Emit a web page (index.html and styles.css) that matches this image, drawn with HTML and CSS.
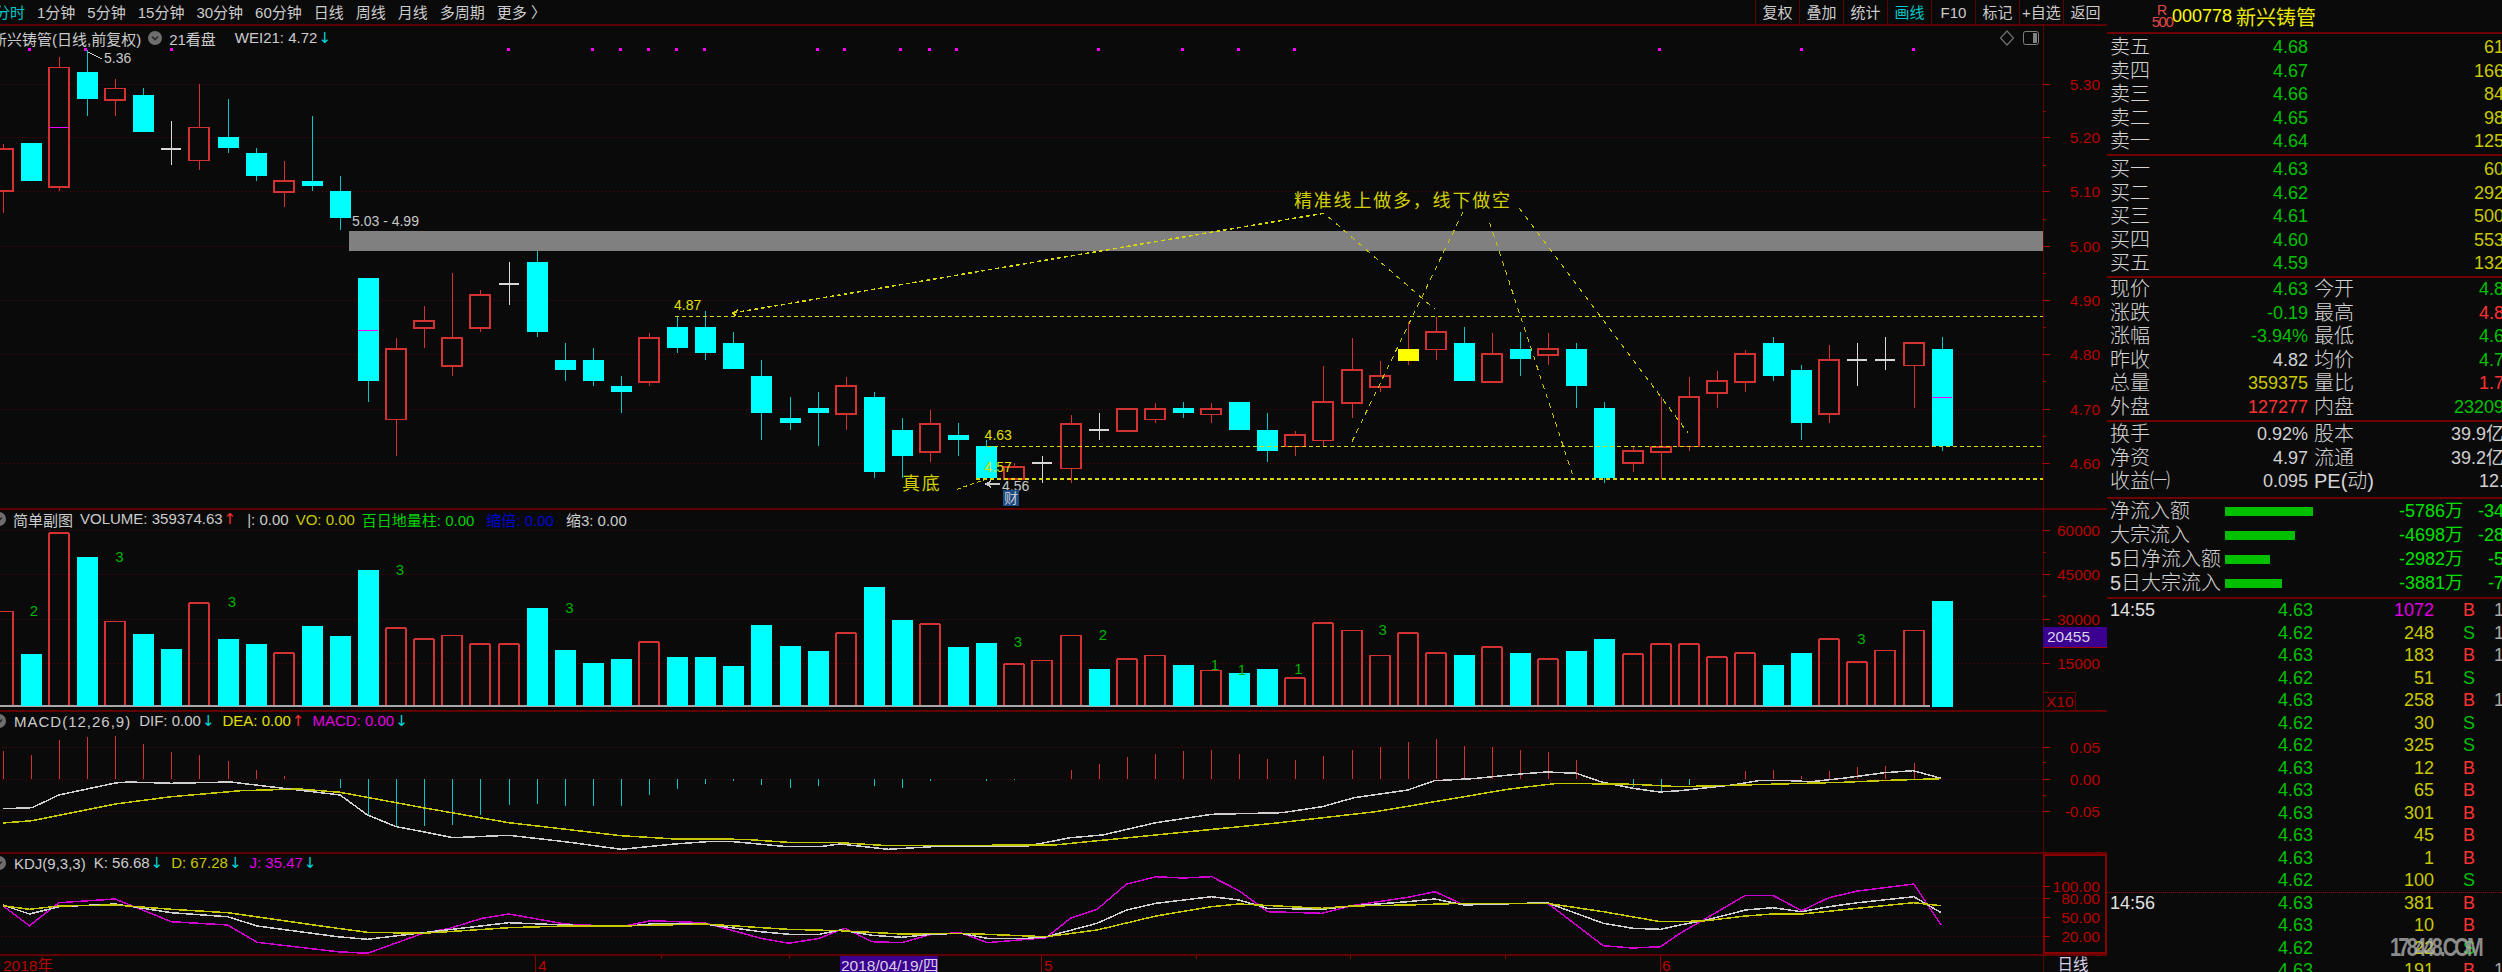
FILE: index.html
```html
<!DOCTYPE html>
<html lang="zh-CN">

<head>
    <meta charset="utf-8">
    <title>新兴铸管 日线</title>
    <link rel="stylesheet" href="styles.css">
    <script defer src="chart.js" charset="utf-8"></script>
</head>

<body>
    <svg class="defs" width="0" height="0">
        <symbol id="fold" viewBox="0 0 14 14">
            <circle cx="7" cy="7" r="7" fill="#6e6e6e"></circle>
            <path d="M4 5.5 L7 8.5 L10 5.5" fill="none" stroke="#2a2a2a" stroke-width="1.6"></path>
        </symbol>
    </svg>

    <div class="left">
        <div class="toolbar">
            <div class="periods">
                <span class="active">分时</span>
                <span>1分钟</span>
                <span>5分钟</span>
                <span>15分钟</span>
                <span>30分钟</span>
                <span>60分钟</span>
                <span>日线</span>
                <span>周线</span>
                <span>月线</span>
                <span>多周期</span>
                <span>更多 〉</span>
            </div>
            <div class="tools">
                <span>复权</span>
                <span>叠加</span>
                <span>统计</span>
                <span class="active">画线</span>
                <span>F10</span>
                <span>标记</span>
                <span>+自选</span>
                <span>返回</span>
            </div>
        </div>

        <div class="pane main-pane">
            <svg id="main" viewBox="0 26 2107 482" width="2107" height="482"></svg>
            <div class="pane-head main-head">
                <span class="cut-name">新兴铸管(日线,前复权)</span>
                <svg class="fold" width="14" height="14"><use href="#fold"></use></svg>
                <span>21看盘</span>
                <span class="wei">WEI21: 4.72<i class="dn">↓</i></span>
            </div>
            <div class="corner-icons">
                <svg width="16" height="16" viewBox="0 0 16 16">
                    <path d="M8 1 L14.5 8 L8 15 L1.5 8 Z" fill="none" stroke="#707070" stroke-width="1.2"></path>
                </svg>
                <svg width="16" height="14" viewBox="0 0 16 14">
                    <rect x="0.5" y="0.5" width="15" height="13" rx="2" fill="none" stroke="#808080"></rect>
                    <rect x="10" y="2" width="4" height="10" fill="#808080"></rect>
                </svg>
            </div>
        </div>

        <div class="pane vol-pane">
            <svg id="vol" viewBox="0 510 2107 200" width="2107" height="200"></svg>
            <div class="pane-head vol-head">
                <svg class="fold clipped" width="14" height="14"><use href="#fold"></use></svg>
                <span>简单副图</span>
                <span>VOLUME: 359374.63<i class="up">↑</i></span>
                <span class="sep-s">|: 0.00</span>
                <span class="c-yellow">VO: 0.00</span>
                <span class="c-green">百日地量柱: 0.00</span>
                <span class="c-blue sep-m">缩倍: 0.00</span>
                <span class="sep-m">缩3: 0.00</span>
            </div>
        </div>

        <div class="pane macd-pane">
            <svg id="macd" viewBox="0 712 2107 140" width="2107" height="140"></svg>
            <div class="pane-head">
                <svg class="fold clipped" width="14" height="14"><use href="#fold"></use></svg>
                <span class="macd-title">MACD(12,26,9)</span>
                <span>DIF: 0.00<i class="dn">↓</i></span>
                <span class="c-yellow2">DEA: 0.00<i class="up">↑</i></span>
                <span class="c-magenta">MACD: 0.00<i class="dn">↓</i></span>
            </div>
        </div>

        <div class="pane kdj-pane">
            <svg id="kdj" viewBox="0 854 2107 100" width="2107" height="100"></svg>
            <div class="pane-head">
                <svg class="fold clipped" width="14" height="14"><use href="#fold"></use></svg>
                <span>KDJ(9,3,3)</span>
                <span>K: 56.68<i class="dn">↓</i></span>
                <span class="c-yellow">D: 67.28<i class="dn">↓</i></span>
                <span class="c-magenta">J: 35.47<i class="dn">↓</i></span>
            </div>
        </div>

        <svg id="dates" viewBox="0 956 2107 16" width="2107" height="16"></svg>
    </div>

    <div class="quote">
        <div class="quote-head">
            <div class="rank"><b>R</b><small>500</small></div>
            <span class="code">000778</span>
            <span class="name">新兴铸管</span>
        </div>

        <div class="section book">
            <div class="row"><span class="lbl">卖五</span><span class="c-price">4.68</span><span class="c-vol">61</span></div>
            <div class="row"><span class="lbl">卖四</span><span class="c-price">4.67</span><span class="c-vol">166</span></div>
            <div class="row"><span class="lbl">卖三</span><span class="c-price">4.66</span><span class="c-vol">84</span></div>
            <div class="row"><span class="lbl">卖二</span><span class="c-price">4.65</span><span class="c-vol">98</span></div>
            <div class="row"><span class="lbl">卖一</span><span class="c-price">4.64</span><span class="c-vol">125</span></div>
        </div>

        <div class="section book">
            <div class="row"><span class="lbl">买一</span><span class="c-price">4.63</span><span class="c-vol">60</span></div>
            <div class="row"><span class="lbl">买二</span><span class="c-price">4.62</span><span class="c-vol">292</span></div>
            <div class="row"><span class="lbl">买三</span><span class="c-price">4.61</span><span class="c-vol">500</span></div>
            <div class="row"><span class="lbl">买四</span><span class="c-price">4.60</span><span class="c-vol">553</span></div>
            <div class="row"><span class="lbl">买五</span><span class="c-price">4.59</span><span class="c-vol">132</span></div>
        </div>

        <div class="section stats">
            <div class="row4"><span class="lbl">现价</span><span class="c-price">4.63</span><span class="lbl">今开</span><span class="c-price">4.8</span></div>
            <div class="row4"><span class="lbl">涨跌</span><span class="c-price">-0.19</span><span class="lbl">最高</span><span class="c-red">4.8</span></div>
            <div class="row4"><span class="lbl">涨幅</span><span class="c-price">-3.94%</span><span class="lbl">最低</span><span class="c-price">4.6</span></div>
            <div class="row4"><span class="lbl">昨收</span><span class="c-white">4.82</span><span class="lbl">均价</span><span class="c-price">4.7</span></div>
            <div class="row4"><span class="lbl">总量</span><span class="c-vol">359375</span><span class="lbl">量比</span><span class="c-red">1.7</span></div>
            <div class="row4"><span class="lbl">外盘</span><span class="c-red">127277</span><span class="lbl">内盘</span><span class="c-price">23209</span></div>
        </div>

        <div class="section info">
            <div class="row4"><span class="lbl">换手</span><span class="c-white">0.92%</span><span class="lbl">股本</span><span class="c-white">39.9亿</span></div>
            <div class="row4"><span class="lbl">净资</span><span class="c-white">4.97</span><span class="lbl">流通</span><span class="c-white">39.2亿</span></div>
            <div class="row4"><span class="lbl">收益㈠</span><span class="c-white">0.095</span><span class="lbl">PE(动)</span><span class="c-white">12.</span></div>
        </div>

        <div class="section flow">
            <div class="flow-row"><span class="lbl">净流入额</span><span class="bar-cell"><i class="bar" style="width:88px"></i></span><span>-5786万</span><span>-34</span></div>
            <div class="flow-row"><span class="lbl">大宗流入</span><span class="bar-cell"><i class="bar" style="width:70px"></i></span><span>-4698万</span><span>-28</span></div>
            <div class="flow-row"><span class="lbl">5日净流入额</span><span class="bar-cell"><i class="bar" style="width:45px"></i></span><span>-2982万</span><span>-5</span></div>
            <div class="flow-row"><span class="lbl">5日大宗流入</span><span class="bar-cell"><i class="bar" style="width:57px"></i></span><span>-3881万</span><span>-7</span></div>
        </div>

        <div class="ticks">
            <div class="tick"><span class="t">14:55</span><span class="c-price">4.63</span><span class="c-magenta">1072</span><span class="b">B</span><span class="extra">1</span></div>
            <div class="tick"><span class="t"></span><span class="c-price">4.62</span><span class="c-vol">248</span><span class="s">S</span><span class="extra">1</span></div>
            <div class="tick"><span class="t"></span><span class="c-price">4.63</span><span class="c-vol">183</span><span class="b">B</span><span class="extra">1</span></div>
            <div class="tick"><span class="t"></span><span class="c-price">4.62</span><span class="c-vol">51</span><span class="s">S</span></div>
            <div class="tick"><span class="t"></span><span class="c-price">4.63</span><span class="c-vol">258</span><span class="b">B</span><span class="extra">1</span></div>
            <div class="tick"><span class="t"></span><span class="c-price">4.62</span><span class="c-vol">30</span><span class="s">S</span></div>
            <div class="tick"><span class="t"></span><span class="c-price">4.62</span><span class="c-vol">325</span><span class="s">S</span></div>
            <div class="tick"><span class="t"></span><span class="c-price">4.63</span><span class="c-vol">12</span><span class="b">B</span></div>
            <div class="tick"><span class="t"></span><span class="c-price">4.63</span><span class="c-vol">65</span><span class="b">B</span></div>
            <div class="tick"><span class="t"></span><span class="c-price">4.63</span><span class="c-vol">301</span><span class="b">B</span></div>
            <div class="tick"><span class="t"></span><span class="c-price">4.63</span><span class="c-vol">45</span><span class="b">B</span></div>
            <div class="tick"><span class="t"></span><span class="c-price">4.63</span><span class="c-vol">1</span><span class="b">B</span></div>
            <div class="tick"><span class="t"></span><span class="c-price">4.62</span><span class="c-vol">100</span><span class="s">S</span></div>
            <div class="tick new-minute"><span class="t">14:56</span><span class="c-price">4.63</span><span class="c-vol">381</span><span class="b">B</span></div>
            <div class="tick"><span class="t"></span><span class="c-price">4.63</span><span class="c-vol">10</span><span class="b">B</span></div>
            <div class="tick"><span class="t"></span><span class="c-price">4.62</span><span class="c-vol">22</span><span class="s">S</span></div>
            <div class="tick"><span class="t"></span><span class="c-price">4.63</span><span class="c-vol">191</span><span class="b">B</span><span class="extra">1</span></div>
        </div>

        <div class="watermark">178448.COM</div>
    </div>
</body>

</html>
```

FILE: styles.css
```css
html,
body {
    margin: 0;
    padding: 0;
    height: 972px;
    overflow: hidden;
    background-color: #0a0a0a;
}

body {
    display: flex;
    width: 2502px;
    font-family: 'Liberation Sans', 'Noto Sans CJK SC', sans-serif;
    color: #cccccc;
}

.defs {
    position: absolute;
}

.left {
    width: 2107px;
    display: flex;
    flex-direction: column;
    flex-shrink: 0;
}

.toolbar {
    height: 24px;
    border-bottom: 2px solid #5c0008;
    display: flex;
    justify-content: space-between;
    font-size: 15px;
    line-height: 25px;
    overflow: hidden;
}

.periods {
    display: flex;
    gap: 12px;
    margin-left: -5px;
}

.tools {
    display: flex;
}

.tools span {
    width: 43px;
    border-left: 1px solid #600000;
    text-align: center;
    white-space: nowrap;
}

.active {
    color: #00c8c8;
}

.pane {
    position: relative;
    border-bottom: 2px solid #600000;
}

.pane svg {
    display: block;
}

.pane-head {
    position: absolute;
    top: 0;
    left: 0;
    display: flex;
    align-items: center;
    gap: 8px;
    height: 18px;
    font-size: 15px;
    white-space: nowrap;
}

.pane-head i {
    font-family: 'DejaVu Sans', sans-serif;
    font-style: normal;
    font-size: 15px;
    margin-left: 1px;
}

.pane-head .dn {
    color: #00d8d8;
}

.pane-head .up {
    color: #ff3030;
}

.pane svg.fold {
    flex-shrink: 0;
}

.pane svg.clipped {
    margin-left: -8px;
}

.main-head {
    height: 24px;
    left: -8px;
    gap: 7px;
}

.wei {
    margin-left: 12px;
}

.vol-head {
    gap: 7px;
}

.sep-s {
    margin-left: 4px;
}

.sep-m {
    margin-left: 5px;
}

.macd-title {
    letter-spacing: 1px;
}

.corner-icons {
    position: absolute;
    top: 4px;
    left: 1999px;
    display: flex;
    align-items: center;
    gap: 8px;
}

.c-yellow {
    color: #c8c800;
}

.c-yellow2 {
    color: #e0e000;
}

.c-green {
    color: #00d000;
}

.c-blue {
    color: #0000d8;
}

.c-magenta {
    color: #e000e0;
}

.c-price {
    color: #00c000;
}

.c-vol {
    color: #c8c800;
}

.c-red {
    color: #ff3232;
}

.c-white {
    color: #d0d0d0;
}

/* right hand quote panel */
.quote {
    position: relative;
    flex: 1;
    min-width: 0;
    overflow: hidden;
    font-size: 18px;
}

.quote-head {
    height: 32px;
    border-bottom: 2px solid #700000;
    display: flex;
    align-items: center;
    padding-left: 45px;
}

.rank {
    display: flex;
    flex-direction: column;
    align-items: center;
    width: 20px;
    color: #e04848;
    line-height: 12px;
}

.rank b {
    font-weight: normal;
    font-size: 14px;
}

.rank small {
    font-size: 15px;
    letter-spacing: -1.5px;
}

.code {
    color: #ffff00;
    font-size: 18px;
    width: 64px;
}

.name {
    color: #e8e800;
    font-size: 20px;
}

.section {
    border-bottom: 2px solid #700000;
    box-sizing: border-box;
    padding-left: 3px;
}

.book {
    height: 122px;
    padding-top: 2px;
}

.stats {
    height: 144px;
}

.info {
    height: 77px;
    padding-top: 1px;
}

.flow {
    height: 100px;
}

.lbl {
    font-size: 20px;
    font-weight: 300;
    white-space: nowrap;
    color: #d4d4d4;
}

.row,
.row4 {
    display: grid;
    height: 23.6px;
    line-height: 23.6px;
    margin-right: -2px;
}

.row {
    grid-template-columns: 60px 138px 1fr;
}

.row4 {
    grid-template-columns: 60px 138px 6px 60px 1fr;
}

.row4 > :nth-child(3) {
    grid-column: 4;
}

.row span:not(.lbl),
.row4 span:not(.lbl),
.flow-row span:nth-child(n+3),
.tick span:nth-child(2),
.tick span:nth-child(3) {
    text-align: right;
}

.flow-row {
    display: grid;
    grid-template-columns: 115px 110px 128px 1fr;
    height: 24px;
    line-height: 24px;
    color: #00e000;
    margin-right: -2px;
}

.bar-cell {
    display: flex;
    align-items: center;
}

.bar {
    display: block;
    height: 9px;
    background-color: #00c000;
}

.tick {
    display: grid;
    grid-template-columns: 140px 63px 121px 14px 42px 1fr;
    height: 22.5px;
    line-height: 22.5px;
    padding-left: 3px;
    box-sizing: border-box;
}

.tick .b,
.tick .s {
    grid-column: 5;
    text-align: center;
}

.tick .b {
    color: #ff3232;
}

.tick .s {
    color: #00c000;
}

.tick .t {
    color: #e0e0e0;
}

.extra {
    padding-left: 4px;
    color: #a8a8a8;
}

.new-minute {
    border-top: 1px dotted #8a0000;
    line-height: 21.5px;
}

.watermark {
    position: absolute;
    left: 283px;
    top: 936px;
    font-size: 20px;
    font-weight: bold;
    letter-spacing: -2.8px;
    transform: scaleY(1.3);
    color: rgba(176, 176, 176, 0.8);
    white-space: nowrap;
}

/* svg text */
svg text {
    font-family: 'Liberation Sans', 'Noto Sans CJK SC', sans-serif;
    dominant-baseline: central;
}

.axis-text {
    font-size: 15.5px;
    fill: #b80000;
}

.note {
    font-size: 14px;
    fill: #c8c8c8;
}

.note-yellow {
    font-size: 14px;
    fill: #e0e000;
}

.cjk-note {
    font-size: 18px;
    letter-spacing: 1.8px;
    fill: #d0d000;
}

.count {
    font-size: 15px;
    fill: #00b400;
}

.date-box {
    font-size: 15.5px;
    fill: #d8d0e8;
}
```

FILE: chart.js
```js
var NS = 'http://www.w3.org/2000/svg';

var RED = '#d43232';
var CYAN = '#00ffff';
var WICK = '#00c8c8';
var GRID = '#6a0008';
var AXIS = '#600000';
var YELLOW = '#d8d800';
var OLIVE = '#c8c800';

function add(svg, tag, attrs, text) {
    var el = document.createElementNS(NS, tag);
    for (var k in attrs) el.setAttribute(k, attrs[k]);
    if (text) el.textContent = text;
    svg.appendChild(el);
    return el;
}

function line(svg, x1, y1, x2, y2, color, width, dash) {
    var attrs = { x1: x1, y1: y1, x2: x2, y2: y2, stroke: color, 'stroke-width': width || 1, 'shape-rendering': 'crispEdges' };
    if (dash) attrs['stroke-dasharray'] = dash;
    return add(svg, 'line', attrs);
}

function rect(svg, x, y, w, h, fill, stroke) {
    return add(svg, 'rect', {
        x: x, y: y, width: w, height: h,
        fill: fill || 'none',
        stroke: stroke || 'none',
        'stroke-width': stroke ? 1.6 : 0,
        'shape-rendering': 'crispEdges'
    });
}

function poly(svg, pts, color) {
    add(svg, 'polyline', {
        points: pts.map(function (p) { return p[0].toFixed(1) + ',' + p[1].toFixed(1); }).join(' '),
        fill: 'none',
        stroke: color,
        'stroke-width': 1.5,
        'shape-rendering': 'crispEdges'
    });
}

function label(svg, x, y, text, cls, anchor) {
    return add(svg, 'text', { x: x, y: y, 'class': cls, 'text-anchor': anchor || 'start' }, text);
}

function X(i) {
    return 2.7 + 28.1 * i;
}

// t: r red, c cyan, w doji with red volume, W doji with cyan volume, y yellow
// [t, high, bodyTop, bodyBottom, low, volumeTop, midLine]
var bars = [
    ['r', 144, 148.7, 191.3, 213, 611.3],
    ['c', 143, 143, 180.7, 180.7, 653.7],
    ['r', 57, 67.7, 186.7, 190.7, 533, 127.7],
    ['c', 50, 72, 99, 115.7, 557.3],
    ['r', 79, 88.7, 100, 115.7, 621.3],
    ['c', 88, 94.7, 132, 132, 633.7],
    ['W', 120.7, 149, 149, 165, 648.7],
    ['r', 84, 127.3, 160.3, 169.7, 602.7],
    ['c', 99.3, 137.3, 148.3, 153.3, 638.7],
    ['c', 148.3, 153.3, 175.7, 180.7, 643.7],
    ['r', 161, 181, 191.7, 207, 652.7],
    ['c', 115.7, 180.7, 185.7, 190.7, 626.3],
    ['c', 176, 190.7, 218.3, 229.7, 636.3],
    ['c', 278.3, 278.3, 380.7, 402, 569.7, 330.3],
    ['r', 338.3, 348.7, 419.3, 455.7, 627.7],
    ['r', 306, 321.3, 328.3, 348.3, 639],
    ['r', 273.3, 337.7, 365.7, 375.7, 635.3],
    ['r', 290, 295, 328.3, 332, 644],
    ['w', 262, 284, 284, 304.7, 644],
    ['c', 250.7, 262, 332, 337, 607.7],
    ['c', 343.3, 359.7, 369.7, 380.7, 650],
    ['c', 348.3, 359.7, 380.7, 385.7, 662.7],
    ['c', 376, 386, 392, 413.3, 658.7],
    ['r', 333.3, 337.7, 381.7, 385.7, 641.7],
    ['c', 316.7, 327.3, 348.3, 353.3, 657.3],
    ['c', 311, 327.3, 353.3, 359.7, 657.3],
    ['c', 332, 343.3, 369.3, 369.3, 666.3],
    ['c', 359.7, 376, 413.3, 439.7, 625],
    ['c', 397, 418.3, 423.3, 429.7, 646.3],
    ['c', 392, 408.3, 413.3, 445.7, 651.3],
    ['r', 377.3, 386.3, 414.3, 429.7, 632.7],
    ['c', 392, 397, 472.3, 478.3, 587.3],
    ['c', 418.3, 429.7, 455.7, 478.3, 620],
    ['r', 410, 423.7, 452, 462, 624],
    ['c', 423.3, 434.7, 439.7, 455.7, 647.3],
    ['c', 440, 446, 478.3, 478.3, 642.7],
    ['r', 462.7, 467.3, 479.3, 479.3, 664],
    ['w', 456, 462.7, 462.7, 483.3, 660.3],
    ['r', 414.7, 423.7, 468.3, 483.3, 635.3],
    ['W', 413.3, 430, 430, 439.7, 668.7],
    ['r', 408.7, 408.7, 430.7, 430.7, 659],
    ['r', 403.3, 408.7, 419.3, 423.3, 655.3],
    ['c', 402, 408.3, 413.3, 418.3, 665],
    ['r', 403.3, 408.7, 414.3, 423.3, 670.3],
    ['c', 402.3, 402.3, 429.7, 429.7, 672.7],
    ['c', 413.3, 429.7, 450.7, 462, 668.7],
    ['r', 431, 435.3, 446.7, 455.7, 677.7],
    ['r', 366, 402.3, 440.7, 446, 622.7],
    ['r', 338.3, 370, 403.3, 418.3, 630.3],
    ['r', 361, 376.3, 387, 392, 655.3],
    ['y', 322.3, 348.7, 360.7, 364.7, 632.7],
    ['r', 316.7, 332.3, 349.7, 359.7, 652.7],
    ['c', 327.3, 343.3, 380.7, 380.7, 655],
    ['r', 333.3, 353.7, 382, 382, 646.7],
    ['c', 332, 348.7, 359.3, 376, 652.7],
    ['r', 333.3, 348.7, 354.7, 364.7, 659],
    ['c', 343.3, 348.7, 386, 408.3, 651.3],
    ['c', 402, 408.3, 478.3, 483.3, 638.7],
    ['r', 446.7, 451.3, 463.3, 472.3, 654],
    ['r', 396.7, 446.7, 452, 479.3, 644],
    ['r', 377.3, 397.3, 446.7, 450.7, 644],
    ['r', 371, 381.3, 393.3, 408.3, 656.7],
    ['r', 349.7, 353.7, 381.7, 392, 652.7],
    ['c', 337.3, 343.3, 376, 381, 665],
    ['c', 364.7, 369.7, 423.3, 439.7, 652.7],
    ['r', 344.7, 360, 414.3, 423.3, 639],
    ['w', 343.3, 360, 360, 385.7, 661.7],
    ['w', 337.3, 360, 360, 369.7, 650.3],
    ['r', 343.3, 343.3, 365.7, 408.3, 630.3],
    ['c', 337.3, 348.7, 446, 450.7, 601.3, 397.7]
];

// end of each MACD stick, one per bar; 779 is the zero line
var macdBars = [751.3, 755, 740.3, 737.3, 736.3, 743.7, 752.3, 755, 761, 770, 776, 778.7, 787.7, 815, 826, 826, 825, 815, 805, 803.7, 806, 806, 806, 795, 789, 784, 781, 785, 787.7, 786, 779, 786, 787.7, 781, 779, 781, 780, 779, 770, 763.7, 757.3, 753.7, 751, 750, 753.7, 758.7, 760, 756.3, 750, 747.3, 742.3, 739, 746, 747.3, 750, 752.3, 760, 779, 787, 791, 785, 779, 771, 769.7, 776, 771, 767, 766, 763.3, 779];

// the line series were read off three crops of the picture
function crop(originX, xScale, originY, pts) {
    var out = [];
    for (var i = 0; i < pts.length; i += 2) {
        out.push([originX + pts[i] / xScale, originY + pts[i + 1] / 3]);
    }
    return out;
}

function series(y, a, b, c) {
    return crop(0, 1.867, y, a).concat(crop(840, 1.867, y, b), crop(1680, 1.9075, y, c));
}

var dif = series(540,
    [5, 806, 60, 803, 110, 765, 215, 729, 240, 726, 320, 730, 430, 726, 520, 743, 635, 765, 686, 825, 740, 860, 790, 875, 845, 893, 950, 886, 1055, 905, 1160, 928, 1260, 912, 1320, 905, 1370, 905, 1470, 920, 1530, 920],
    [0, 912, 90, 928, 195, 918, 350, 918, 430, 893, 490, 885, 590, 848, 694, 823, 825, 818, 900, 800, 960, 773, 1060, 750, 1110, 722, 1180, 716, 1270, 702, 1320, 696, 1375, 700, 1420, 725, 1480, 745, 1530, 756],
    [0, 752, 100, 735, 150, 722, 210, 722, 250, 725, 310, 715, 390, 698, 445, 692, 498, 715]);

var dea = series(540,
    [5, 849, 60, 842, 215, 792, 320, 770, 450, 752, 560, 747, 635, 757, 790, 803, 950, 848, 1160, 887, 1260, 897, 1390, 898, 1470, 907],
    [0, 908, 90, 917, 400, 915, 590, 885, 820, 848, 1000, 815, 1250, 747, 1340, 730, 1480, 733],
    [0, 740, 100, 736, 310, 727, 400, 721, 498, 716]);

var kLine = series(540,
    [5, 1095, 55, 1122, 110, 1100, 215, 1092, 320, 1118, 425, 1130, 480, 1158, 630, 1190, 686, 1198, 790, 1178, 950, 1148, 1055, 1155, 1160, 1160, 1215, 1152, 1315, 1152, 1420, 1175, 1473, 1183, 1530, 1183],
    [0, 1170, 60, 1186, 115, 1192, 170, 1183, 225, 1180, 275, 1195, 350, 1195, 385, 1190, 480, 1150, 535, 1110, 590, 1090, 694, 1070, 745, 1080, 798, 1105, 900, 1108, 955, 1098, 1060, 1085, 1111, 1077, 1165, 1095, 1320, 1088, 1425, 1150, 1480, 1165, 1532, 1168],
    [0, 1155, 50, 1140, 125, 1110, 177, 1103, 232, 1115, 284, 1100, 339, 1088, 446, 1070, 498, 1118]);

var dLine = series(540,
    [5, 1097, 55, 1108, 110, 1098, 215, 1095, 320, 1108, 425, 1118, 630, 1165, 686, 1177, 790, 1180, 950, 1163, 1055, 1158, 1160, 1158, 1315, 1152, 1470, 1168],
    [0, 1172, 115, 1182, 225, 1180, 385, 1190, 480, 1170, 590, 1128, 694, 1100, 745, 1092, 900, 1105, 955, 1098, 1060, 1095, 1165, 1090, 1320, 1090, 1425, 1115, 1532, 1145],
    [0, 1145, 50, 1142, 125, 1128, 177, 1122, 232, 1122, 339, 1105, 446, 1088, 498, 1097]);

var jLine = series(540,
    [5, 1097, 55, 1157, 110, 1088, 215, 1077, 320, 1145, 425, 1155, 480, 1207, 630, 1235, 686, 1240, 790, 1180, 840, 1165, 900, 1135, 950, 1122, 1055, 1152, 1160, 1160, 1215, 1142, 1315, 1148, 1420, 1195, 1473, 1210, 1530, 1195],
    [0, 1170, 10, 1165, 60, 1205, 115, 1208, 170, 1183, 225, 1178, 275, 1208, 385, 1193, 430, 1135, 480, 1108, 535, 1032, 590, 1010, 640, 1014, 694, 1010, 745, 1052, 798, 1115, 900, 1120, 955, 1097, 1060, 1072, 1111, 1055, 1165, 1095, 1320, 1088, 1425, 1217, 1480, 1224, 1532, 1220],
    [0, 1180, 50, 1135, 125, 1066, 177, 1066, 232, 1112, 284, 1073, 339, 1053, 446, 1032, 498, 1155]);

function grid(svg, ys) {
    ys.forEach(function (y) {
        line(svg, 2, y, 2043, y, GRID, 1, '1 3');
    });
}

function axis(svg, top, bottom, major, minor) {
    line(svg, 2043, top, 2043, bottom, AXIS, 1);
    major.forEach(function (m) {
        line(svg, 2043, m[0], 2050, m[0], '#a00000', 1);
        label(svg, 2100, m[0], m[1], 'axis-text', 'end');
    });
    minor.forEach(function (y) {
        line(svg, 2043, y, 2046, y, '#a00000', 1);
    });
}

function drawMain() {
    var svg = document.getElementById('main');
    var prices = [[84, '5.30'], [137.5, '5.20'], [191, '5.10'], [246.7, '5.00'], [300, '4.90'], [354, '4.80'], [409, '4.70'], [463, '4.60']];
    grid(svg, prices.map(function (p) { return p[0]; }));

    [29.5, 85.7, 171, 508, 592, 620, 648, 676, 704, 817, 844, 900.5, 929.4, 956.8, 1098, 1182, 1238, 1294, 1659.5, 1801, 1913].forEach(function (x) {
        rect(svg, x - 1.5, 48, 3, 3, '#ff00ff');
    });

    // pressure band
    rect(svg, 349.4, 230.5, 1693.6, 20, '#808080');

    bars.forEach(function (b, i) {
        var x = Math.round(X(i));
        var t = b[0];
        if (t === 'w' || t === 'W') {
            line(svg, x, b[1], x, b[4], '#d8d8d8', 1);
            line(svg, x - 10, b[2], x + 10, b[2], '#d8d8d8', 2);
            return;
        }
        if (t === 'y') {
            line(svg, x, b[1], x, b[4], RED, 1);
            rect(svg, x - 10.5, b[2], 21, b[3] - b[2], '#ffff00');
            return;
        }
        if (t === 'r') {
            line(svg, x, b[1], x, b[2], RED, 1);
            line(svg, x, b[3], x, b[4], RED, 1);
            rect(svg, x - 10, b[2], 20, b[3] - b[2], '#0a0a0a', RED);
        } else {
            line(svg, x, b[1], x, b[4], WICK, 1);
            rect(svg, x - 10.5, b[2], 21, b[3] - b[2], CYAN);
        }
        if (b[6]) line(svg, x - 10, b[6], x + 10, b[6], '#ff00ff', 1);
    });

    // drawn support and resistance lines
    line(svg, 675, 316.7, 2043, 316.7, YELLOW, 1.5, '4 3');
    line(svg, 987, 446.3, 2043, 446.3, YELLOW, 1.5, '4 3');
    line(svg, 976, 479, 2043, 479, YELLOW, 1.5, '4 3');
    line(svg, 1323.7, 213.3, 733, 313, YELLOW, 1.5, '4 3');
    line(svg, 1328.5, 217, 1434.5, 309, OLIVE, 1, '5 5');
    line(svg, 1463, 212, 1350, 445.7, OLIVE, 1, '5 5');
    line(svg, 1489.7, 222.7, 1573.8, 478.3, OLIVE, 1, '5 5');
    line(svg, 1519, 207.7, 1688, 433, OLIVE, 1, '5 5');
    line(svg, 956.8, 489.3, 987, 479, OLIVE, 1, '4 3');
    poly(svg, [[738, 310], [733, 313], [736, 316]], YELLOW);

    label(svg, 1294, 201, '精准线上做多，线下做空', 'cjk-note');
    label(svg, 902, 484, '真底', 'cjk-note');
    label(svg, 674, 305, '4.87', 'note-yellow');
    label(svg, 984.6, 435, '4.63', 'note-yellow');
    label(svg, 984.6, 467.3, '4.57', 'note-yellow');
    label(svg, 104, 58, '5.36', 'note');
    label(svg, 352, 220.7, '5.03 - 4.99', 'note');
    label(svg, 1002, 486, '4.56', 'note');
    line(svg, 88, 52, 102, 59, '#c8c8c8', 1);
    line(svg, 986, 484, 1000, 484, '#c8c8c8', 1.5);
    poly(svg, [[991, 481], [986, 484], [991, 487]], '#c8c8c8');

    rect(svg, 1003.4, 490, 16, 16, '#1a4a86');
    label(svg, 1004, 498, '财', 'note');

    axis(svg, 26, 508, prices, [111, 165, 219, 273, 327, 381.7, 436]);
}

function drawVol() {
    var svg = document.getElementById('vol');
    var marks = [[530, '60000'], [574, '45000'], [619, '30000'], [663, '15000']];
    grid(svg, marks.map(function (m) { return m[0]; }));

    line(svg, 0, 706, 1930, 706, '#a8a8a8', 2);
    bars.forEach(function (b, i) {
        var x = Math.round(X(i));
        if (b[0] === 'c' || b[0] === 'W') {
            rect(svg, x - 10.5, b[5], 21, 706 - b[5] + (i === 69 ? 1 : 0), CYAN);
        } else {
            line(svg, x - 10, b[5], x + 10, b[5], RED, 1.6);
            line(svg, x - 10, b[5], x - 10, 705, RED, 1.3);
            line(svg, x + 10, b[5], x + 10, 705, RED, 1.3);
        }
    });

    [[34, 610.7, '2'], [119.4, 556.7, '3'], [232, 601.7, '3'], [400, 569.3, '3'], [569.4, 607, '3'], [1017.8, 641.7, '3'], [1103, 634.7, '2'], [1215, 664.3, '1'], [1242, 669.3, '1'], [1298.5, 668.3, '1'], [1382.6, 629.3, '3'], [1861.4, 638, '3']].forEach(function (c) {
        label(svg, c[0], c[1], c[2], 'count', 'middle');
    });

    axis(svg, 510, 710, marks, [552, 596.7, 641]);

    rect(svg, 2043, 627, 64, 20, '#3c0090');
    line(svg, 2043, 647, 2107, 647, '#a00000', 1);
    label(svg, 2047, 636, '20455', 'date-box');
    line(svg, 2075, 692, 2075, 710, AXIS, 1);
    line(svg, 2043, 692, 2075, 692, AXIS, 1);
    label(svg, 2046, 701, 'X10', 'axis-text');
}

function drawMacd() {
    var svg = document.getElementById('macd');
    var marks = [[747, '0.05'], [779, '0.00'], [811, '-0.05']];
    grid(svg, [747, 779, 811]);

    macdBars.forEach(function (end, i) {
        if (end === 779) return;
        var x = Math.round(X(i));
        line(svg, x, 779, x, end, end < 779 ? RED : WICK, 1);
    });
    poly(svg, dif, '#d0d0d0');
    poly(svg, dea, OLIVE);

    axis(svg, 712, 852, marks, [762.7, 795.7]);
}

function drawKdj() {
    var svg = document.getElementById('kdj');
    var marks = [[886, '100.00'], [898, '80.00'], [917, '50.00'], [936, '20.00']];
    grid(svg, [886, 898, 917, 936]);

    poly(svg, jLine, '#d000d0');
    poly(svg, kLine, '#d0d0d0');
    poly(svg, dLine, OLIVE);

    axis(svg, 854, 954, marks, []);
    add(svg, 'rect', { x: 2044, y: 855, width: 62, height: 98, fill: 'none', stroke: '#8a0000', 'stroke-width': 2, 'shape-rendering': 'crispEdges' });
}

function drawDates() {
    var svg = document.getElementById('dates');
    line(svg, 2043, 956, 2043, 972, AXIS, 1);
    [535, 1041, 1660].forEach(function (x) {
        line(svg, x, 956, x, 972, '#8a0000', 1);
    });
    [661, 789, 1196, 1350, 1505].forEach(function (x) {
        line(svg, x, 956, x, 959, '#8a0000', 1);
    });
    label(svg, 3, 965, '2018年', 'axis-text');
    label(svg, 538, 965, '4', 'axis-text');
    label(svg, 1044, 965, '5', 'axis-text');
    label(svg, 1662, 965, '6', 'axis-text');
    rect(svg, 840, 956, 98, 16, '#3c0090');
    label(svg, 841, 965, '2018/04/19/四', 'date-box');
    label(svg, 2073, 964, '日线', 'date-box', 'middle');
}

drawMain();
drawVol();
drawMacd();
drawKdj();
drawDates();
```
